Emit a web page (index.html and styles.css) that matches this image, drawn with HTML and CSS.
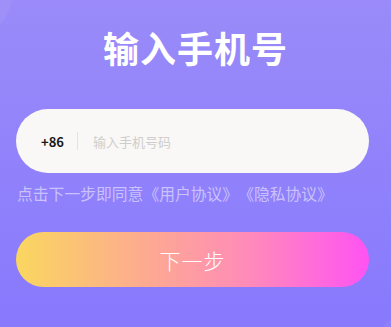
FILE: index.html
```html
<!DOCTYPE html>
<html lang="zh">
<head>
<meta charset="utf-8">
<link rel="stylesheet" href="styles.css">
</head>
<body>
<div class="page">
  <div class="deco deco-tl"></div>
  <div class="deco deco-br"></div>
  <h1 class="title">输入手机号</h1>
  <div class="phone">
    <span class="code">+86</span>
    <span class="divider"></span>
    <span class="placeholder">输入手机号码</span>
  </div>
  <p class="agree">点击下一步即同意《用户协议》《隐私协议》</p>
  <div class="next">下一步</div>
</div>
</body>
</html>
```
FILE: styles.css
```css
html, body {
  margin: 0;
  padding: 0;
}
body {
  font-family: "Noto Sans CJK SC", "Noto Sans", sans-serif;
}
.page {
  position: relative;
  overflow: hidden;
  width: 391px;
  height: 327px;
  box-sizing: border-box;
  padding: 0 22px 0 16px;
  background: linear-gradient(180deg, #9a8bf9 0%, #8879fd 100%);
  display: flex;
  flex-direction: column;
}
.deco {
  position: absolute;
  border-radius: 50%;
  background: rgba(255, 255, 255, 0.05);
}
.deco-tl {
  width: 80px;
  height: 80px;
  left: -68px;
  top: -44px;
}
.deco-br {
  width: 80px;
  height: 80px;
  right: -62px;
  bottom: -66px;
}
.title {
  margin: 23px 0 0;
  text-align: center;
  font-size: 36px;
  line-height: 48px;
  font-weight: 600;
  color: #ffffff;
  letter-spacing: 1px;
  padding-left: 6px;
}
.phone {
  margin-top: 38px;
  height: 64px;
  border-radius: 32px;
  background: #f9f8f6;
  display: flex;
  align-items: center;
  padding-left: 25px;
}
.code {
  font-size: 13px;
  font-weight: 700;
  color: #1a1a1a;
}
.divider {
  width: 1px;
  height: 18px;
  background: #e4e2e0;
  margin: 0 15px 0 13px;
}
.placeholder {
  font-size: 13px;
  color: #cfcecc;
}
.agree {
  margin: 10px 0 0 1px;
  font-size: 15.8px;
  line-height: 22px;
  color: #cbc2fc;
  white-space: nowrap;
  text-spacing-trim: space-all;
}
.next {
  margin-top: 27px;
  height: 55px;
  border-radius: 28px;
  background: linear-gradient(90deg, #fad75f 0%, #fdac8e 35%, #ff8cb8 65%, #ff53f3 100%);
  display: flex;
  align-items: center;
  justify-content: center;
  color: #ffffff;
  font-size: 21px;
  font-weight: 300;
  letter-spacing: 1px;
}
```
